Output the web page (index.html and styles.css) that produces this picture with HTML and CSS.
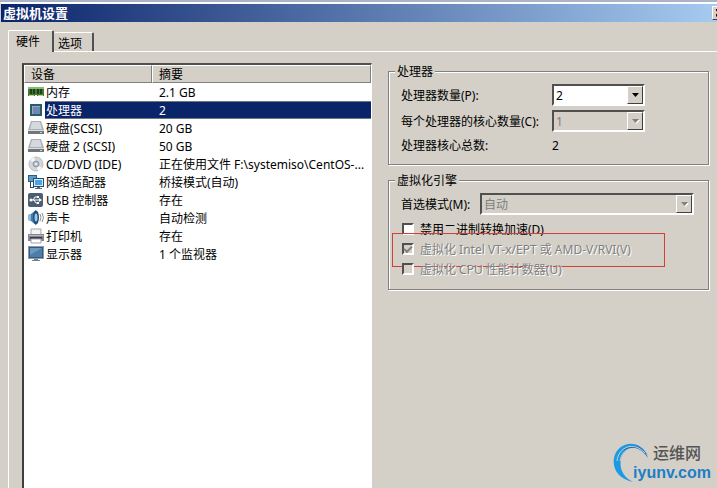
FILE: index.html
```
<!DOCTYPE html>
<html lang="zh-CN">
<head>
  <meta charset="UTF-8">
  <meta name="viewport" content="width=device-width, initial-scale=1.0">
  <title>虚拟机设置</title>
  <link rel="stylesheet" href="styles.css">
</head>
<body>
<div class="window">
  <div class="titlebar">
    <h1>虚拟机设置</h1>
    <button class="close" aria-label="关闭"><svg width="8" height="8" viewBox="0 0 8 8"><path d="M0 0l7 7M7 0L0 7" stroke="#000" stroke-width="2"/></svg></button>
  </div>

  <div class="tabs">
    <button class="tab active">硬件</button>
    <button class="tab">选项</button>
  </div>

  <div class="panel">
    <div class="device-list">
      <table>
        <thead>
          <tr><th class="col-device">设备</th><th>摘要</th></tr>
        </thead>
        <tbody>
          <tr>
            <td><div class="device">
              <svg class="icon" viewBox="0 0 16 16"><path d="M0 3h16v9H9v-1H7v1H0z" fill="#3c7d32"/><path d="M0 3h16v2H0z" fill="#86bd68"/><path d="M2 5h2v5H2zM5 5h2v5H5zM9 5h2v5H9zM12 5h2v5h-2z" fill="#263b25"/><path d="M1 11h5v1H1zM10 11h5v1h-5z" fill="#c7cf72"/></svg>
              <span>内存</span></div></td>
            <td>2.1 GB</td>
          </tr>
          <tr class="selected">
            <td><div class="device">
              <svg class="icon" viewBox="0 0 16 16"><path d="M2 2h12v12H2z" fill="#255e68"/><path d="M4 4h8v8H4z" fill="#7087b2"/><path d="M4 4h8v1H5v7H4z" fill="#9aabc9"/><path d="M4 14h2v1H4z" fill="#fff"/></svg>
              <span>处理器</span></div></td>
            <td>2</td>
          </tr>
          <tr>
            <td><div class="device">
              <svg class="icon" viewBox="0 0 16 16"><path d="M3 1h10l3 9H0z" fill="#a9afb5"/><path d="M4 2h8l2 7H2z" fill="#d5d9dd"/><path d="M0 10h16v4H0z" fill="#6f767d"/><path d="M0 10h16v1H0z" fill="#dcdfe1"/><path d="M12 12h2v1h-2z" fill="#b9e4a6"/></svg>
              <span>硬盘(SCSI)</span></div></td>
            <td>20 GB</td>
          </tr>
          <tr>
            <td><div class="device">
              <svg class="icon" viewBox="0 0 16 16"><path d="M3 1h10l3 9H0z" fill="#a9afb5"/><path d="M4 2h8l2 7H2z" fill="#d5d9dd"/><path d="M0 10h16v4H0z" fill="#6f767d"/><path d="M0 10h16v1H0z" fill="#dcdfe1"/><path d="M12 12h2v1h-2z" fill="#b9e4a6"/></svg>
              <span>硬盘 2 (SCSI)</span></div></td>
            <td>50 GB</td>
          </tr>
          <tr>
            <td><div class="device">
              <svg class="icon" viewBox="0 0 16 16"><circle cx="8" cy="8" r="7" fill="#d3d7db" stroke="#b9bdc2"/><path d="M8 8L2 4a7 7 0 0 1 4-3zM8 8l6 4a7 7 0 0 1-4 3z" fill="#f4f5f6"/><circle cx="8" cy="8" r="3" fill="#b4bcc5" stroke="#8b98a6"/><circle cx="8" cy="8" r="1" fill="#fff"/></svg>
              <span>CD/DVD (IDE)</span></div></td>
            <td>正在使用文件 F:\systemiso\CentOS-...</td>
          </tr>
          <tr>
            <td><div class="device">
              <svg class="icon" viewBox="0 0 16 16"><path d="M0 1h9v7H0z" fill="#285f88"/><path d="M1 2h7v5H1z" fill="#5c9cc6"/><path d="M2 8h1v5h3v1H2z" fill="#444"/><path d="M5 4h11v9H5z" fill="#1f4f78"/><path d="M6 5h9v7H6z" fill="#d6e9f5"/><path d="M7 6h7v5H7z" fill="#49a4e4"/><path d="M9 13h3v1h2v1H7v-1h2z" fill="#5f6b75"/></svg>
              <span>网络适配器</span></div></td>
            <td>桥接模式(自动)</td>
          </tr>
          <tr>
            <td><div class="device">
              <svg class="icon" viewBox="0 0 16 16"><rect x="0" y="1" width="15" height="14" rx="2" fill="#4c5e72"/><path d="M3 8h9M5 8l2-3h2M6 8l2 3h2" fill="none" stroke="#fff"/><circle cx="3" cy="8" r="1.500" fill="#fff"/><path d="M11 6l3 2-3 2zM9 4h2v2H9zM9 10h2v2H9z" fill="#fff"/></svg>
              <span>USB 控制器</span></div></td>
            <td>存在</td>
          </tr>
          <tr>
            <td><div class="device">
              <svg class="icon" viewBox="0 0 16 16"><path d="M0 5l3-1 5-4v15l-5-4-3-1z" fill="#3c7cae"/><path d="M0 5l3-1v7l-3-1z" fill="#8cb9d9"/><ellipse cx="8" cy="7.500" rx="3" ry="7" fill="#214f7c"/><ellipse cx="8" cy="7.500" rx="1.500" ry="4" fill="#9dcbe6"/><path d="M12 4q2 3 0 7M14 3q3 5 0 9" fill="none" stroke="#8a9299"/></svg>
              <span>声卡</span></div></td>
            <td>自动检测</td>
          </tr>
          <tr>
            <td><div class="device">
              <svg class="icon" viewBox="0 0 16 16"><path d="M3 1h10v6H3z" fill="#f4f4f6" stroke="#a3a3ab"/><path d="M0 6h16v7H0z" fill="#85858f"/><path d="M1 7h14v1H1z" fill="#b8b8c0"/><path d="M2 9h12v2H2z" fill="#3d3d49"/><path d="M3 11h10v4H3z" fill="#fff" stroke="#a3a3ab"/></svg>
              <span>打印机</span></div></td>
            <td>存在</td>
          </tr>
          <tr>
            <td><div class="device">
              <svg class="icon" viewBox="0 0 16 16"><path d="M0 0h16v13H0z" fill="#8c9cab"/><path d="M1 1h14v11H1z" fill="#315b83"/><path d="M2 2h12v9H2z" fill="#4d7da9"/><path d="M2 2h12L2 9z" fill="#6d99bf"/><path d="M6 13h4v1h2v1H4v-1h2z" fill="#77818b"/></svg>
              <span>显示器</span></div></td>
            <td>1 个监视器</td>
          </tr>
        </tbody>
      </table>
    </div>

    <div class="settings">
      <fieldset class="group">
        <legend>处理器</legend>
        <div class="field">
          <label for="cpus">处理器数量(P):</label>
          <div class="select">
            <select id="cpus"><option>2</option></select>
            <span class="arrow"><svg width="7" height="4" viewBox="0 0 7 4"><path d="M0 0h7L3.500 4z"/></svg></span>
          </div>
        </div>
        <div class="field">
          <label for="cores">每个处理器的核心数量(C):</label>
          <div class="select">
            <select id="cores" disabled><option>1</option></select>
            <span class="arrow"><svg width="7" height="4" viewBox="0 0 7 4"><path d="M0 0h7L3.500 4z"/></svg></span>
          </div>
        </div>
        <div class="field total">
          <span>处理器核心总数:</span>
          <output>2</output>
        </div>
      </fieldset>

      <fieldset class="group">
        <legend>虚拟化引擎</legend>
        <div class="field mode">
          <label for="mode">首选模式(M):</label>
          <div class="select">
            <select id="mode" disabled><option>自动</option></select>
            <span class="arrow"><svg width="7" height="4" viewBox="0 0 7 4"><path d="M0 0h7L3.500 4z"/></svg></span>
          </div>
        </div>
        <label class="check"><input type="checkbox"><span>禁用二进制转换加速(D)</span></label>
        <label class="check disabled marked"><input type="checkbox" checked disabled><span>虚拟化 Intel VT-x/EPT 或 AMD-V/RVI(V)</span></label>
        <label class="check disabled"><input type="checkbox" disabled><span>虚拟化 CPU 性能计数器(U)</span></label>
      </fieldset>
    </div>
  </div>

  <div class="watermark">
    <svg width="40" height="42" viewBox="0 0 40 42">
      <path d="M22 41C8 38 1 28 3 17 6 1 28-4 37 15 28 3 13 5 10 18c-2 9 2 18 12 23z" fill="#1c9be4"/>
      <path d="M12 10C20 0 33 4 37 17 30 7 21 4 12 10z" fill="#1a71c4"/>
      <path d="M6 20C7 7 22-1 34 12M9 20C11 7 25 2 35 15" fill="none" stroke="#d4d0c8"/>
    </svg>
    <div class="brand">
      <span class="brand-cn">运维网</span>
      <span class="brand-url">iyunv.com</span>
    </div>
  </div>
</div>
</body>
</html>
```
FILE: styles.css
```
*, *::before, *::after {
  box-sizing: border-box;
}

body {
  margin: 0;
  background-color: #d4d0c8;
  color: #000;
  font-family: "Noto Sans", "Noto Sans CJK SC", sans-serif;
  font-size: 12px;
  line-height: 18px;
}

button, select {
  font: inherit;
  color: inherit;
}

.window {
  position: relative;
  display: flex;
  flex-direction: column;
  min-height: 100vh;
  overflow: hidden;
  border-top: 2px solid #a9b4c6;
}

.titlebar {
  display: flex;
  justify-content: space-between;
  align-items: center;
  height: 20px;
  border-top: 2px solid #fff;
  border-left: 1px solid #d4d0c8;
  background: linear-gradient(to right, #0a246a, #a6caf0);
  color: #fff;
}

.titlebar h1 {
  margin: 0;
  padding-left: 2px;
  font-size: 13px;
  line-height: 18px;
}

.close {
  display: flex;
  justify-content: center;
  align-items: center;
  flex: none;
  width: 16px;
  height: 14px;
  margin-right: -11px;
  padding: 0;
  border: 1px solid;
  border-color: #fff #404040 #404040 #fff;
  background-color: #d4d0c8;
}

/* tabs */
.tabs {
  display: flex;
  align-items: flex-end;
  padding: 8px 0 0 8px;
}

.tab {
  width: 40px;
  height: 19px;
  padding: 2px 0 0 4px;
  border: 1px solid #fff;
  border-right: 2px solid #505050;
  border-bottom: none;
  border-left: none;
  border-radius: 2px 2px 0 0;
  background-color: #d4d0c8;
  text-align: left;
  line-height: 18px;
}

.tab.active {
  position: relative;
  width: 46px;
  height: 22px;
  margin-bottom: -1px;
  padding: 0 0 0 7px;
  border-left: 1px solid #fff;
}

.panel {
  display: grid;
  flex: 1;
  grid-template-columns: minmax(0, 350fr) minmax(0, 321fr);
  gap: 16px;
  margin-left: 8px;
  padding: 11px 8px 0 13px;
  border-top: 1px solid #fff;
  border-left: 1px solid #fff;
}

/* device list */
.device-list {
  border: 2px solid #404040;
  border-top-color: #505050;
  border-right: 1px solid #fff;
  border-bottom: none;
  background-color: #fff;
}

.device-list table {
  width: 100%;
  table-layout: fixed;
  border-collapse: separate;
  border-spacing: 0;
}

.device-list th {
  height: 18px;
  padding: 2px 6px 0;
  border: 1px solid;
  border-color: #fff #808080 #808080 #fff;
  background-color: #d4d0c8;
  font-weight: normal;
  text-align: left;
  line-height: 14px;
}

.col-device {
  width: 128px;
}

.device-list td {
  height: 18px;
  padding: 2px 0 0 7px;
  white-space: nowrap;
  line-height: 16px;
}

.device-list td:first-child {
  padding: 0 0 0 4px;
}

.device {
  display: flex;
  align-items: center;
  gap: 1px;
}

.device span {
  flex: 1;
  height: 18px;
  padding: 2px 0 0 1px;
}

.icon {
  flex: none;
  width: 16px;
  height: 16px;
}

.selected {
  color: #fff;
}

.selected td:last-child,
.selected .device span {
  background: linear-gradient(to right, #d8c890 50%, #0a246a 50%) top / 2px 1px repeat-x,
    linear-gradient(to right, #d8c890 50%, #0a246a 50%) bottom / 2px 1px repeat-x,
    #0a246a;
}

/* settings */
.group {
  min-width: 0;
  margin: 0 0 7px;
  padding: 5px 14px 10px 12px;
  border: 1px solid #808080;
  box-shadow: 1px 1px 0 #fff, inset 1px 1px 0 #fff;
}

.group legend {
  margin-left: -6px;
  padding: 2px 2px 0;
  background-color: #d4d0c8;
  line-height: 14px;
}

.field {
  display: grid;
  grid-template-columns: 151px 93px;
  align-items: center;
  margin-bottom: 4px;
}

.field.total {
  margin-bottom: 0;
}

.field.mode {
  grid-template-columns: 79px 1fr;
}

.select {
  position: relative;
}

.select select {
  display: block;
  width: 100%;
  height: 22px;
  padding: 1px 20px 0 2px;
  border: 2px solid;
  border-color: #505050 #fff #fff #505050;
  border-radius: 0;
  background-color: #fff;
  appearance: none;
}

.select select:disabled {
  background-color: #d4d0c8;
  color: #808080;
  opacity: 1;
}

.arrow {
  position: absolute;
  top: 2px;
  right: 2px;
  bottom: 2px;
  display: flex;
  justify-content: center;
  align-items: center;
  width: 16px;
  border: 1px solid;
  border-color: #fff #404040 #404040 #fff;
  background-color: #d4d0c8;
  pointer-events: none;
}

select:disabled + .arrow svg {
  fill: #808080;
  filter: drop-shadow(1px 1px 0 #fff);
}

.field label,
.field > span,
.field output,
.check span {
  padding-top: 2px;
  line-height: 16px;
}

.check {
  position: relative;
  display: flex;
  align-items: center;
  gap: 6px;
  height: 20px;
  white-space: nowrap;
}

.check input {
  display: grid;
  place-content: center;
  width: 12px;
  height: 12px;
  margin: 0 0 0 1px;
  border: 2px solid;
  border-color: #505050 #fff #fff #505050;
  background-color: #fff;
  appearance: none;
}

.check input:disabled {
  background-color: #d4d0c8;
}

.check input:checked::before {
  content: "";
  width: 8px;
  height: 5px;
  margin-bottom: 2px;
  border: solid #808080;
  border-width: 0 0 2px 2px;
  transform: rotate(-45deg);
}

.check.disabled {
  color: #808080;
  text-shadow: 1px 1px 0 #fff;
}

/* red frame round the VT-x option */
.marked::after {
  content: "";
  position: absolute;
  top: -6px;
  left: -9px;
  width: 273px;
  height: 34px;
  border: 1px solid #d04038;
}

.watermark {
  position: absolute;
  right: 6px;
  bottom: 5px;
  display: flex;
}

.brand {
  display: flex;
  flex-direction: column;
  margin-left: -18px;
  white-space: nowrap;
}

.brand-cn {
  padding-left: 20px;
  color: #555;
  font-size: 16px;
  font-weight: 500;
  line-height: 24px;
}

.brand-url {
  color: #1a7fc8;
  font-family: "Liberation Sans", sans-serif;
  font-size: 16px;
  font-weight: bold;
  line-height: 16px;
}
```
